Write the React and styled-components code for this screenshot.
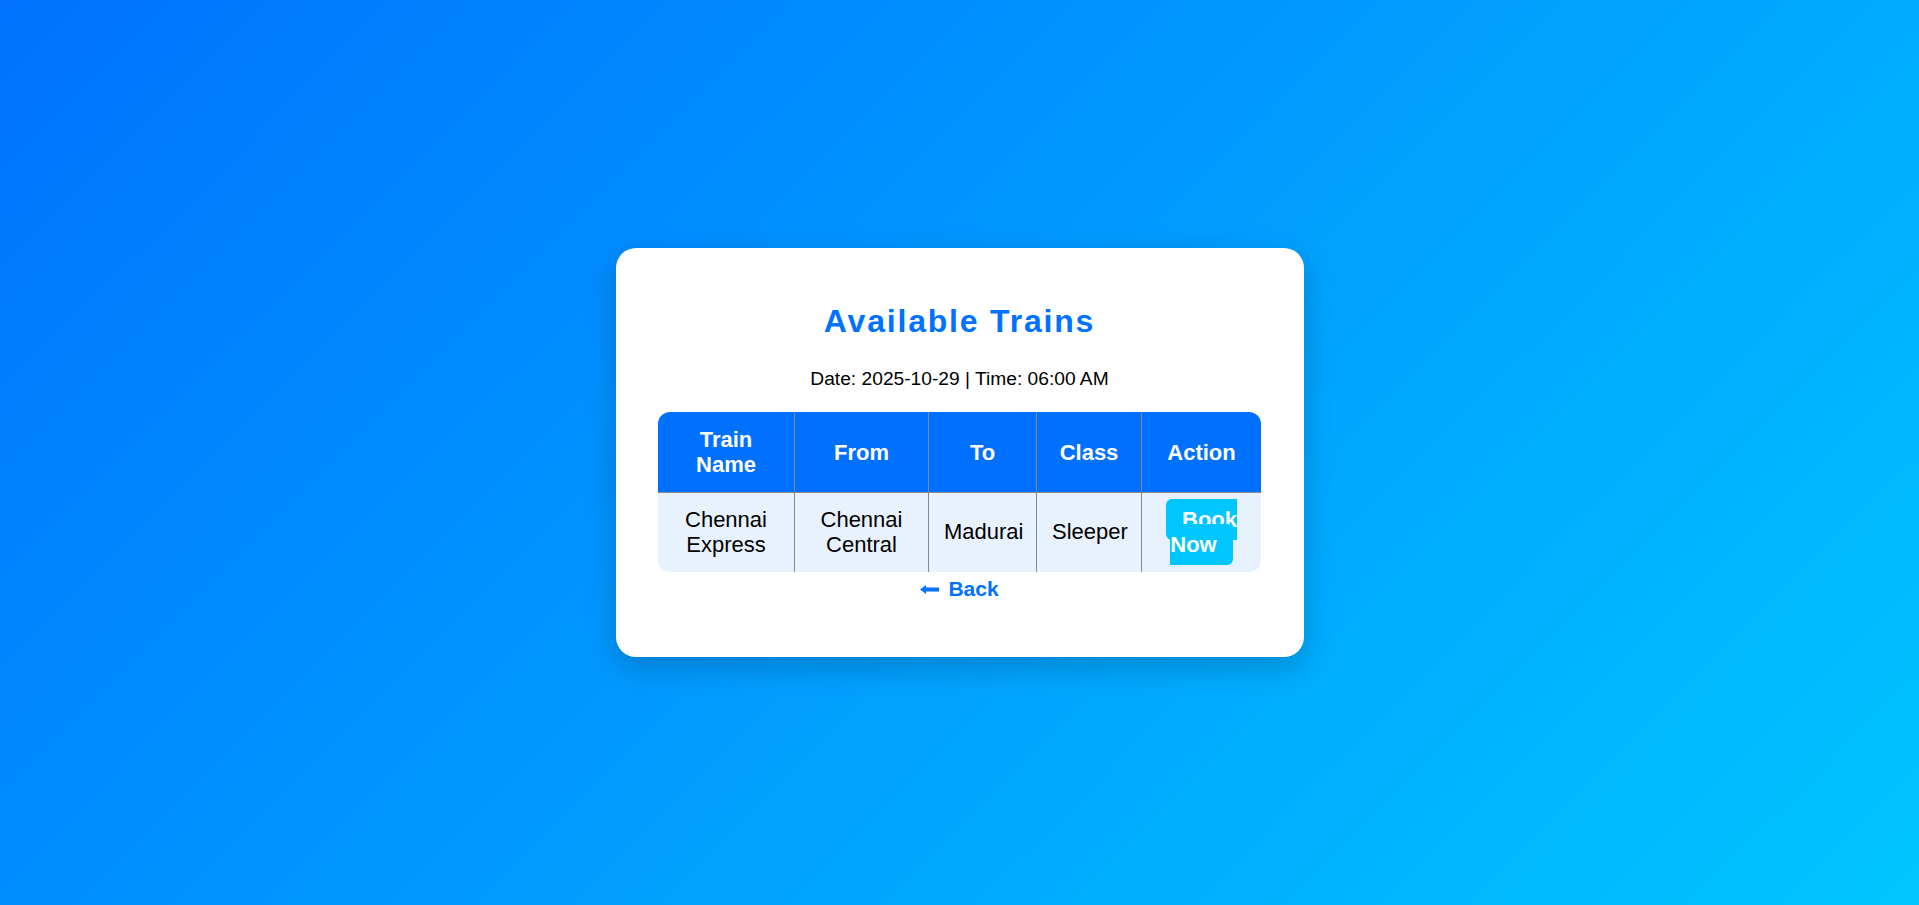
import styled, { createGlobalStyle } from "styled-components";

const GlobalStyle = createGlobalStyle`
  * {
    box-sizing: border-box;
  }

  body {
    margin: 0;
    font-family: "Liberation Sans", Arial, sans-serif;
    background: linear-gradient(135deg, #0072ff, #00c6ff);
    min-height: 100vh;
  }
`;

const trains = [
  {
    name: "Chennai Express",
    from: "Chennai Central",
    to: "Madurai",
    travelClass: "Sleeper",
  },
];

const columns = [
  { label: "Train Name", width: 137 },
  { label: "From", width: 134 },
  { label: "To", width: 108 },
  { label: "Class", width: 105 },
  { label: "Action", width: 119 },
];

const BackArrow = () => (
  <svg width="19" height="9" viewBox="0 0 19 9" aria-hidden="true">
    <polygon points="0,4.5 6,0 6,9" fill="currentColor" />
    <rect x="5" y="2.5" width="14" height="4" fill="currentColor" />
  </svg>
);

const App = () => {
  return (
    <Page>
      <GlobalStyle />
      <Card>
        <Title>Available Trains</Title>
        <Info>Date: 2025-10-29 | Time: 06:00 AM</Info>
        <Table>
          <colgroup>
            {columns.map((c) => (
              <col key={c.label} style={{ width: c.width }} />
            ))}
          </colgroup>
          <thead>
            <tr>
              {columns.map((c) => (
                <Th key={c.label}>{c.label}</Th>
              ))}
            </tr>
          </thead>
          <tbody>
            {trains.map((t) => (
              <tr key={t.name}>
                <Td>{t.name}</Td>
                <Td>{t.from}</Td>
                <Td>{t.to}</Td>
                <Td>{t.travelClass}</Td>
                <Td>
                  <BookLink href="#">Book Now</BookLink>
                </Td>
              </tr>
            ))}
          </tbody>
        </Table>
        <BackLink href="#">
          <BackArrow />
          Back
        </BackLink>
      </Card>
    </Page>
  );
};

export default App;

const Page = styled.div`
  min-height: 100vh;
  display: flex;
  align-items: center;
  justify-content: center;
`;

const Card = styled.div`
  width: 688px;
  background: #fff;
  border-radius: 20px;
  padding: 40px 42.5px 40px;
  box-shadow: 0 10px 30px rgba(0, 0, 0, 0.2);
  text-align: center;
`;

const Title = styled.h2`
  margin: 15.5px 0 27.5px;
  font-size: 32px;
  line-height: 37px;
  letter-spacing: 1.8px;
  color: #0072ff;
  font-weight: 700;
`;

const Info = styled.p`
  margin: 0 0 22.5px;
  font-size: 19.2px;
  line-height: 22px;
  color: #000;
`;

const Table = styled.table`
  width: 100%;
  table-layout: fixed;
  border-collapse: separate;
  border-spacing: 0;
  border-radius: 12px;
  overflow: hidden;
  font-size: 22px;
  line-height: 25.3px;
`;

const Th = styled.th`
  background: #0070ff;
  color: #fff;
  font-weight: 700;
  padding: 14.5px 15px;
  border-bottom: 1px solid #888;
  border-right: 1px solid #888;
  text-align: center;

  &:last-child {
    border-right: none;
  }
`;

const Td = styled.td`
  background: #e8f2ff;
  color: #000;
  padding: 13.5px 15px 15px;
  border-right: 1px solid #888;
  text-align: center;

  &:last-child {
    border-right: none;
  }
`;

const BookLink = styled.a`
  background: #00c6ff;
  color: #fff;
  font-weight: 700;
  padding: 8px 16px;
  border-radius: 6px;
  text-decoration: none;
`;

const BackLink = styled.a`
  display: inline-flex;
  align-items: center;
  gap: 9px;
  margin: 5px 0 16px;
  font-size: 21px;
  line-height: 24px;
  font-weight: 700;
  color: #0072ff;
  text-decoration: none;
`;
